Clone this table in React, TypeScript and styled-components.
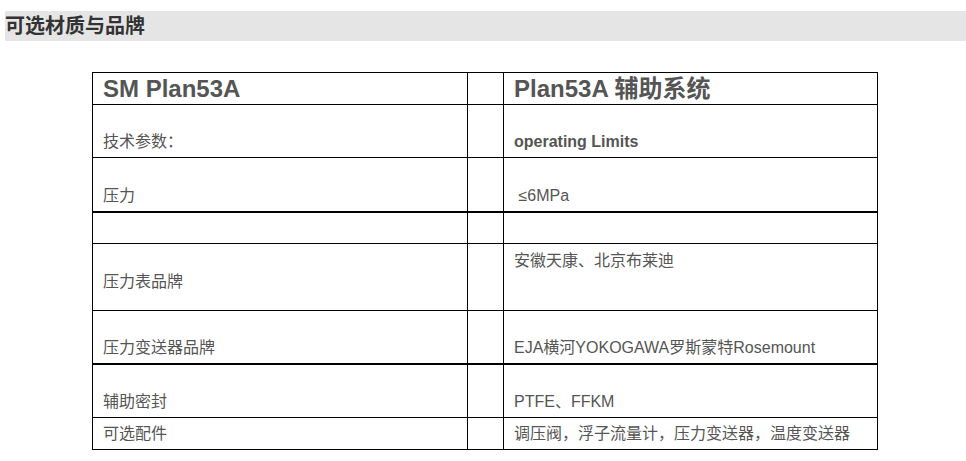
import styled, { createGlobalStyle } from "styled-components";

const GlobalStyle = createGlobalStyle`
	body {
		margin: 0;
		background: #fff;
		font-family: "Liberation Sans", "Noto Sans CJK SC", sans-serif;
	}
`;

type Row = {
	left: string;
	right: string;
	height: number;
	thick?: boolean;
	leftAlign?: "top" | "middle" | "bottom";
	rightAlign?: "top" | "middle" | "bottom";
	leftPad?: number;
	rightPad?: number;
	rightBold?: boolean;
};

const rows: Row[] = [
	{ left: "技术参数：", right: "operating Limits", height: 53, rightBold: true },
	{ left: "压力", right: "\u00a0≤6MPa", height: 54, thick: true },
	{ left: "", right: "", height: 32 },
	{ left: "压力表品牌", right: "安徽天康、北京布莱迪", height: 67, leftPad: 18, rightAlign: "top", rightPad: 6 },
	{ left: "压力变送器品牌", right: "EJA横河YOKOGAWA罗斯蒙特Rosemount", height: 53, thick: true },
	{ left: "辅助密封", right: "PTFE、FFKM", height: 54 },
	{ left: "可选配件", right: "调压阀，浮子流量计，压力变送器，温度变送器", height: 32, leftAlign: "middle", rightAlign: "middle" },
];

export default function App() {
	return (
		<>
			<GlobalStyle />
			<Page>
				<SectionTitle>可选材质与品牌</SectionTitle>
				<SpecTable>
					<colgroup>
						<col style={{ width: 375 }} />
						<col style={{ width: 36 }} />
						<col style={{ width: 374 }} />
					</colgroup>
					<tbody>
						<HeadRow>
							<HeadCell>SM Plan53A</HeadCell>
							<HeadCell />
							<HeadCell>Plan53A 辅助系统</HeadCell>
						</HeadRow>
						{rows.map((r, i) => (
							<BodyRow key={i} $thick={r.thick} $h={r.height}>
								<Cell $align={r.leftAlign ?? "bottom"} $pad={r.leftPad ?? 5}>
									{r.left}
								</Cell>
								<Cell $align="bottom" $pad={5} />
								<Cell $align={r.rightAlign ?? "bottom"} $pad={r.rightPad ?? 5} $bold={r.rightBold}>
									{r.right}
								</Cell>
							</BodyRow>
						))}
					</tbody>
				</SpecTable>
			</Page>
		</>
	);
}

const Page = styled.div`
	padding: 11px 0 0 5px;
`;

const SectionTitle = styled.h3`
	margin: 0;
	height: 30px;
	line-height: 30px;
	background: #e5e5e5;
	color: #333;
	font-size: 20px;
	font-weight: bold;
`;

const SpecTable = styled.table`
	margin: 31px 0 0 87px;
	width: 785px;
	border-collapse: collapse;
	table-layout: fixed;
	border: 1px solid #000;
`;

const HeadRow = styled.tr`
	height: 32px;
`;

const HeadCell = styled.td`
	border: 1px solid #000;
	padding: 0 10px;
	vertical-align: middle;
	font-size: 24px;
	font-weight: bold;
	color: #555;
	line-height: 28px;
`;

const BodyRow = styled.tr<{ $thick?: boolean; $h: number }>`
	height: ${({ $h }) => $h}px;
	td {
		border-bottom: ${({ $thick }) => ($thick ? 2 : 1)}px solid #000;
	}
`;

const Cell = styled.td<{ $align: "top" | "middle" | "bottom"; $pad: number; $bold?: boolean }>`
	border-left: 1px solid #000;
	border-right: 1px solid #000;
	padding: ${({ $align, $pad }) => ($align === "top" ? `${$pad}px 10px 0` : $align === "bottom" ? `0 10px ${$pad}px` : "0 10px")};
	vertical-align: ${({ $align }) => $align};
	font-size: 16px;
	line-height: 21px;
	color: #555;
	font-weight: ${({ $bold }) => ($bold ? "bold" : "normal")};
	white-space: nowrap;
`;
